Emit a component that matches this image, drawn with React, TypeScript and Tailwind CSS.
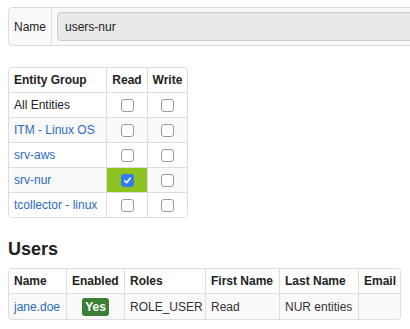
import React from "react";

const font = { fontFamily: '"Liberation Sans", Arial, Helvetica, sans-serif' };

function Box({ checked }: { checked?: boolean }) {
  if (checked) {
    return (
      <span className="w-[13px] h-[13px] rounded-[3px] bg-[#2f7df6] flex items-center justify-center">
        <svg width="9" height="9" viewBox="0 0 9 9">
          <path d="M1.8 4.8 L3.7 6.6 L7.2 2.2" fill="none" stroke="#fff" strokeWidth="1.6" strokeLinecap="round" strokeLinejoin="round" />
        </svg>
      </span>
    );
  }
  return <span className="w-[13px] h-[13px] rounded-[3px] border border-[#9b9b9b] bg-white" />;
}

const groups = [
  { name: "All Entities", link: false, read: false },
  { name: "ITM - Linux OS", link: true, read: false },
  { name: "srv-aws", link: true, read: false },
  { name: "srv-nur", link: true, read: true },
  { name: "tcollector - linux", link: true, read: false },
];

export default function App() {
  return (
    <div className="w-[410px] h-[329px] overflow-hidden bg-white text-[12px] text-[#333]" style={font}>
      <div className="pl-[8px] pt-[7px]">
        {/* Name box */}
        <div className="w-[430px] h-[39px] border border-[#ddd] rounded-[4px] bg-[#f9f9f9] flex">
          <div className="w-[43px] border-r border-[#ddd] flex items-center pl-[5px] text-[#222]">Name</div>
          <div className="flex-1 pl-[5px] py-[4px]">
            <div className="h-[29px] rounded-[4px] border border-[#ccc] bg-[#e9e9e9] flex items-center pl-[7px] text-[#222]">
              users-nur
            </div>
          </div>
        </div>

        {/* Entity table */}
        <div className="mt-[21px] w-[180px] border border-[#ddd] rounded-[4px] overflow-hidden">
          <div className="flex h-[24px] font-bold text-[#222]">
            <div className="w-[97px] pl-[5px] flex items-center">Entity Group</div>
            <div className="w-[41px] border-l border-[#ddd] flex items-center justify-center">Read</div>
            <div className="w-[40px] border-l border-[#ddd] flex items-center justify-center">Write</div>
          </div>
          {groups.map((g, i) => (
            <div key={g.name} className={"flex h-[25px] border-t border-[#ddd] " + (i % 2 === 1 ? "bg-[#f9f9f9]" : "bg-white")}>
              <div className={"w-[97px] pl-[5px] flex items-center whitespace-nowrap " + (g.link ? "text-[#2a6bbf]" : "text-[#222]")}>
                {g.name}
              </div>
              <div className={"w-[41px] border-l border-[#ddd] flex items-center justify-center " + (g.read ? "bg-[#8dc21f]" : "")}>
                <Box checked={g.read} />
              </div>
              <div className="w-[40px] border-l border-[#ddd] flex items-center justify-center">
                <Box />
              </div>
            </div>
          ))}
        </div>

        {/* Users */}
        <h2 className="mt-[21px] text-[18px] leading-[20px] font-bold text-[#222]">Users</h2>
        <div className="mt-[9px] w-[393px] border border-[#ddd] rounded-[4px] overflow-hidden">
          <div className="flex h-[24px] font-bold text-[#222] bg-white">
            <div className="w-[57px] pl-[5px] flex items-center">Name</div>
            <div className="w-[58px] border-l border-[#ddd] pl-[5px] flex items-center">Enabled</div>
            <div className="w-[81px] border-l border-[#ddd] pl-[5px] flex items-center">Roles</div>
            <div className="w-[74px] border-l border-[#ddd] pl-[5px] flex items-center">First Name</div>
            <div className="w-[79px] border-l border-[#ddd] pl-[5px] flex items-center">Last Name</div>
            <div className="w-[42px] border-l border-[#ddd] pl-[5px] flex items-center">Email</div>
          </div>
          <div className="flex h-[26px] border-t border-[#ddd] bg-[#f9f9f9]">
            <div className="w-[57px] pl-[5px] flex items-center text-[#2a6bbf]">jane.doe</div>
            <div className="w-[58px] border-l border-[#ddd] flex items-center justify-center">
              <span className="h-[18px] px-[3px] rounded-[3px] bg-[#3b7f34] text-white font-bold flex items-center">Yes</span>
            </div>
            <div className="w-[81px] border-l border-[#ddd] pl-[5px] flex items-center">ROLE_USER</div>
            <div className="w-[74px] border-l border-[#ddd] pl-[5px] flex items-center">Read</div>
            <div className="w-[79px] border-l border-[#ddd] pl-[5px] flex items-center">NUR entities</div>
            <div className="w-[42px] border-l border-[#ddd] pl-[5px] flex items-center"></div>
          </div>
        </div>
      </div>
    </div>
  );
}
